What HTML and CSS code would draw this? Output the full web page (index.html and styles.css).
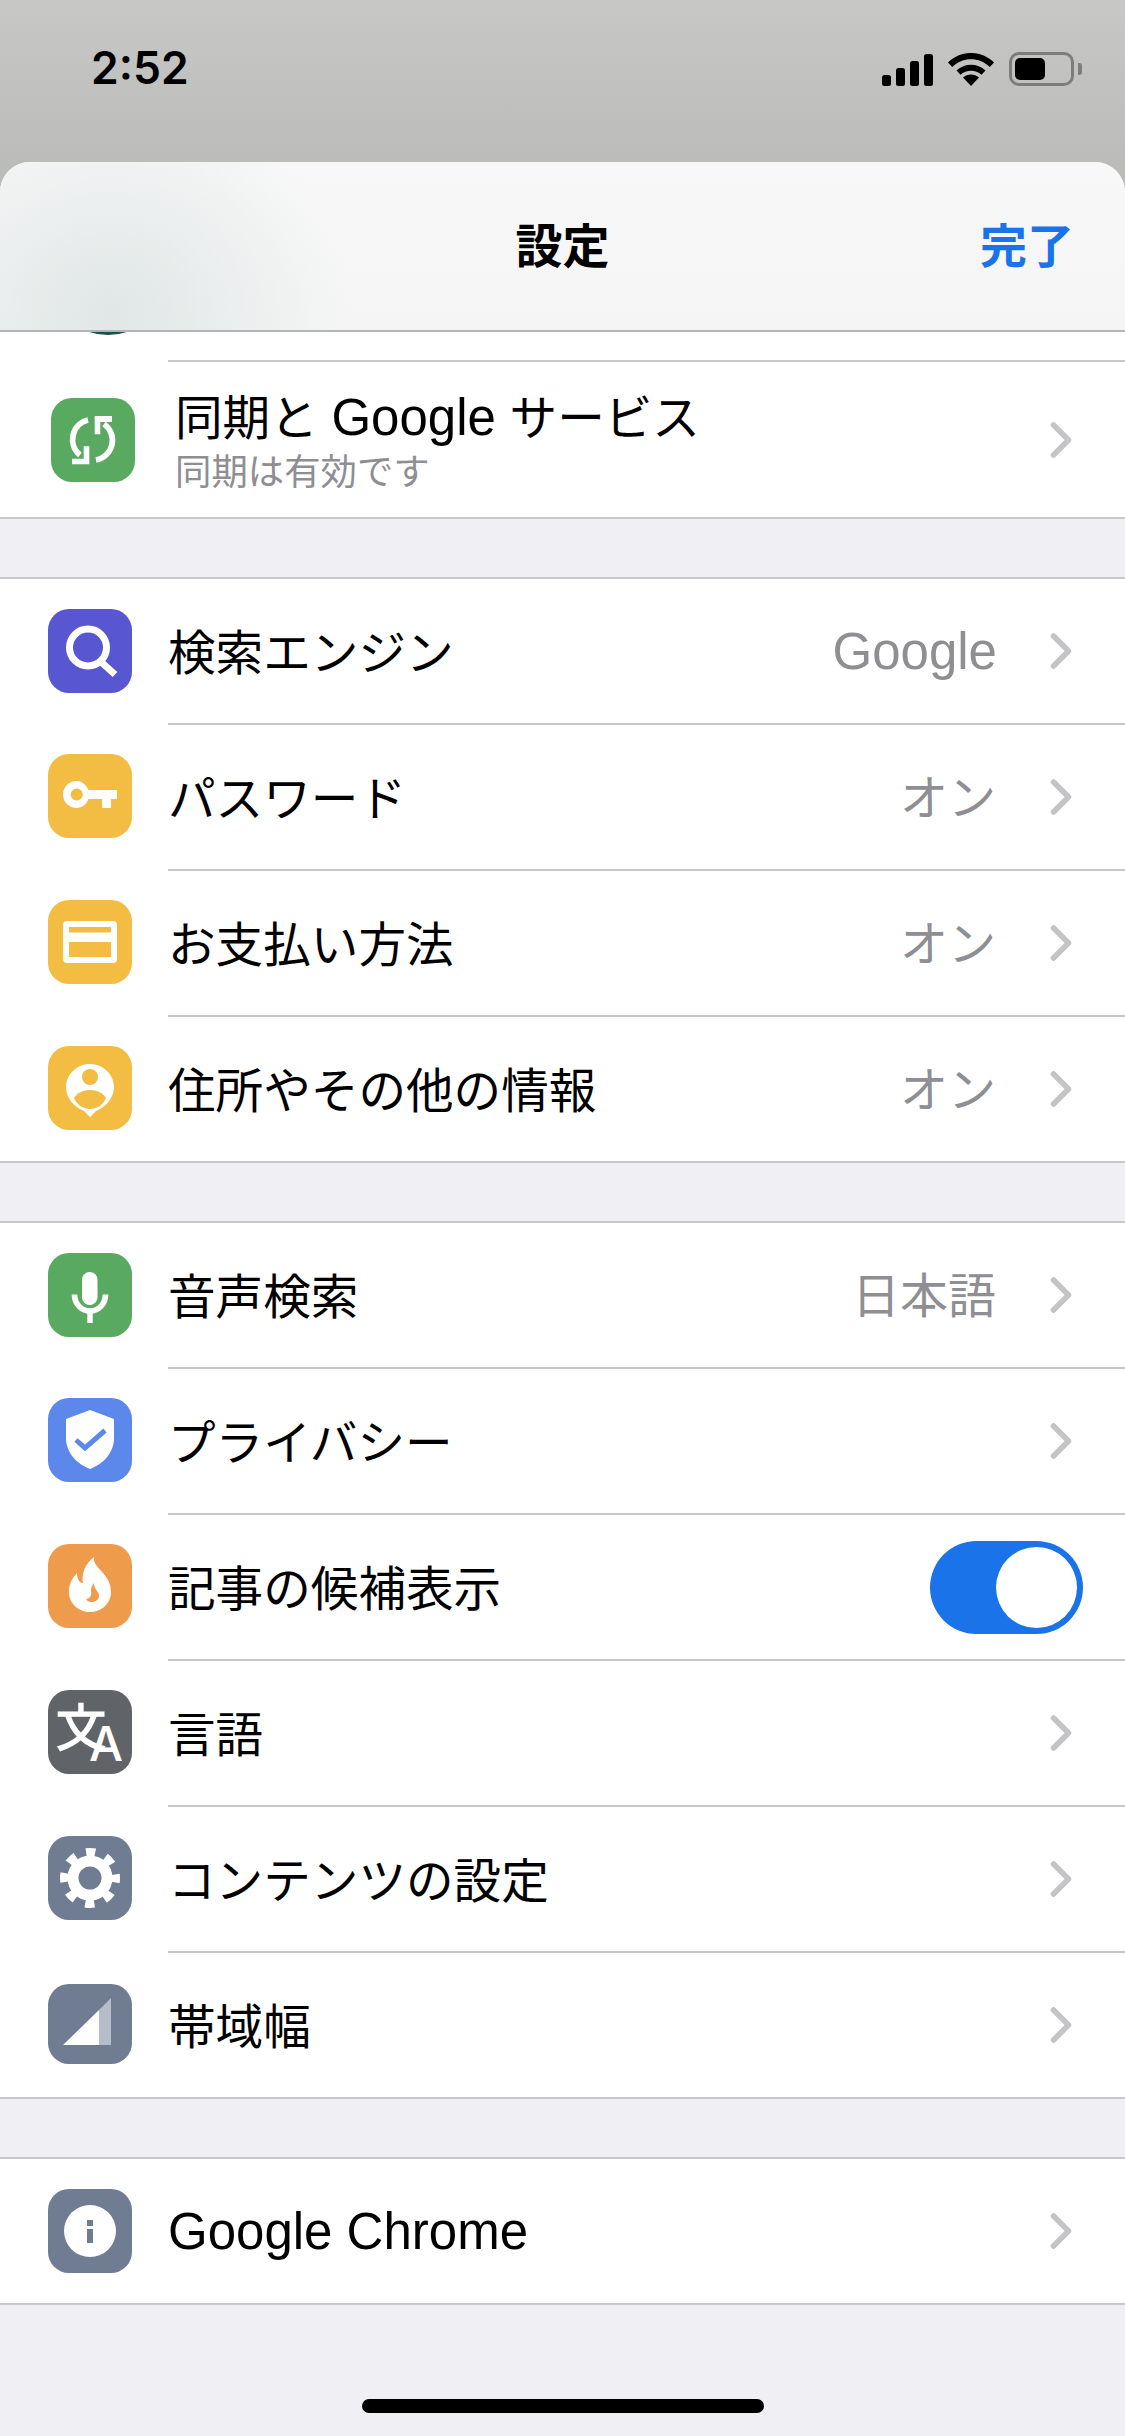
FILE: index.html
```html
<!DOCTYPE html>
<html lang="ja">
<head>
  <meta charset="UTF-8" />
  <meta name="viewport" content="width=device-width, initial-scale=1.0"/>
  <title>設定</title>
  <link rel="stylesheet" href="styles.css">
</head>
<body>

<div class="status-bar">
  <span class="clock">2:52</span>
  <div class="status-icons">
    <svg class="ic-signal" width="51" height="32" viewBox="0 0 51 32"><rect x="0" y="21" width="9" height="11" rx="2.5"/><rect x="14" y="14" width="9" height="18" rx="2.5"/><rect x="28" y="7" width="9" height="25" rx="2.5"/><rect x="42" y="0" width="9" height="32" rx="2.5"/></svg>
    <svg class="ic-wifi" width="46" height="33" viewBox="0 0 46 33"><path d="M23 33L15 24.500C19.500 20.500 26.500 20.500 31 24.500Z"/><path d="M8.500 17.500C16.500 9.800 29.500 9.800 37.500 17.500L33.500 21.800C27.700 16.300 18.300 16.300 12.500 21.800Z"/><path d="M0 9.500C13 -3.200 33 -3.200 46 9.500L41.800 14C31.500 3.500 14.500 3.500 4.200 14Z"/></svg>
    <div class="battery"><div class="battery-level"></div></div>
    <div class="battery-cap"></div>
  </div>
</div>

<div class="sheet">
  <header class="sheet-head">
    <h1>設定</h1>
    <a class="done">完了</a>
  </header>

  <div class="peek"><div class="peek-avatar"></div></div>

  <div class="group group-sync">
    <div class="row row-sync">
      <span class="icon green">
        <svg viewBox="0 0 84 84"><path class="line" d="M37 22A20 20 0 0 0 29 57"/><path class="line" d="M45 62A20 20 0 0 0 53 26"/><path class="fill" d="M21 60.700H32.700V48.300H38.300V66.300H21Z"/><path class="fill" d="M43.700 18H61V24H49.300V36.300H43.700Z"/></svg>
      </span>
      <div class="row-body">
        <div class="two-line">
          <div class="label">同期と <span class="latin">Google</span> サービス</div>
          <div class="sub">同期は有効です</div>
        </div>
        <svg class="chevron" viewBox="0 0 22 36"><path d="M3.500 3L18.500 18L3.500 33"/></svg>
      </div>
    </div>
  </div>

  <div class="group">
    <div class="row">
      <span class="icon indigo">
        <svg viewBox="0 0 84 84"><circle class="line line-7" cx="40" cy="38.500" r="18.500"/><path class="line line-7" d="M52 52L67 65.500"/></svg>
      </span>
      <div class="row-body">
        <div class="label">検索エンジン</div>
        <div class="value latin">Google</div>
        <svg class="chevron" viewBox="0 0 22 36"><path d="M3.500 3L18.500 18L3.500 33"/></svg>
      </div>
    </div>
    <div class="row">
      <span class="icon yellow">
        <svg viewBox="0 0 84 84"><path class="fill" fill-rule="evenodd" d="M28.700 27C34 27 38.500 31 40.500 36H69V45H63V54H54V45H40.500C38.500 50.500 34 54 28.700 54C21 54 15 48 15 40.500C15 33 21 27 28.700 27ZM28.700 34.500A6 6 0 1 0 28.700 46.500A6 6 0 1 0 28.700 34.500Z"/></svg>
      </span>
      <div class="row-body">
        <div class="label">パスワード</div>
        <div class="value">オン</div>
        <svg class="chevron" viewBox="0 0 22 36"><path d="M3.500 3L18.500 18L3.500 33"/></svg>
      </div>
    </div>
    <div class="row">
      <span class="icon yellow">
        <svg viewBox="0 0 84 84"><rect class="fill" x="15" y="21" width="54" height="42" rx="4"/><rect class="cut-yellow" x="21" y="27" width="42" height="5.500"/><rect class="cut-yellow" x="21" y="42" width="42" height="15"/></svg>
      </span>
      <div class="row-body">
        <div class="label">お支払い方法</div>
        <div class="value">オン</div>
        <svg class="chevron" viewBox="0 0 22 36"><path d="M3.500 3L18.500 18L3.500 33"/></svg>
      </div>
    </div>
    <div class="row">
      <span class="icon yellow">
        <svg viewBox="0 0 84 84"><path class="fill" d="M42 18C55.300 18 66 28.700 66 41C66 52 58 61 48 65L42 71L36 65C26 61 18 52 18 41C18 28.700 28.700 18 42 18Z"/><circle class="cut-yellow" cx="42" cy="31" r="8"/><path class="cut-yellow" d="M26 52C29 47 35 44 42 44C49 44 55 47 58 52C55 59 49 63 42 63C35 63 29 59 26 52Z"/></svg>
      </span>
      <div class="row-body">
        <div class="label">住所やその他の情報</div>
        <div class="value">オン</div>
        <svg class="chevron" viewBox="0 0 22 36"><path d="M3.500 3L18.500 18L3.500 33"/></svg>
      </div>
    </div>
  </div>

  <div class="group">
    <div class="row">
      <span class="icon green">
        <svg viewBox="0 0 84 84"><rect class="fill" x="34" y="19" width="15.500" height="33" rx="7.700"/><path class="line" d="M26.500 41.500C26.500 50.500 33 58 42 58C51 58 57.500 50.500 57.500 41.500"/><rect class="fill" x="39.300" y="57" width="5.400" height="13"/></svg>
      </span>
      <div class="row-body">
        <div class="label">音声検索</div>
        <div class="value">日本語</div>
        <svg class="chevron" viewBox="0 0 22 36"><path d="M3.500 3L18.500 18L3.500 33"/></svg>
      </div>
    </div>
    <div class="row">
      <span class="icon blue">
        <svg viewBox="0 0 84 84"><path class="fill" d="M42 12L66 21V40C66 55 55 66 42 71C29 66 18 55 18 40V21Z"/><path class="check" d="M28 42L37 50L57 32.500"/></svg>
      </span>
      <div class="row-body">
        <div class="label">プライバシー</div>
        <svg class="chevron" viewBox="0 0 22 36"><path d="M3.500 3L18.500 18L3.500 33"/></svg>
      </div>
    </div>
    <div class="row">
      <span class="icon orange">
        <svg viewBox="0 0 84 84"><path class="fill" d="M46 13C44 24 63 29 63 48C63 60 53 68 42 68C31 68 21 60 21 48C21 40 24 34 29 29C29 34 31 39 35 39C33 29 38 19 46 13Z"/><path class="cut-orange" d="M46 39C46 46 51 47 51 52C51 56 47 58 43 58C41 58 39 57 38 55C42 55 44 51 43 47C43 44 44 41 46 39Z"/></svg>
      </span>
      <div class="row-body">
        <div class="label">記事の候補表示</div>
        <div class="toggle"><div class="knob"></div></div>
      </div>
    </div>
    <div class="row">
      <span class="icon slate">
        <svg class="svg-open" viewBox="0 0 84 84"><text class="glyph" x="8" y="56"><tspan class="glyph-wen">文</tspan><tspan class="glyph-a" x="41" y="71">A</tspan></text></svg>
      </span>
      <div class="row-body">
        <div class="label">言語</div>
        <svg class="chevron" viewBox="0 0 22 36"><path d="M3.500 3L18.500 18L3.500 33"/></svg>
      </div>
    </div>
    <div class="row">
      <span class="icon steel">
        <svg viewBox="0 0 84 84"><circle class="line line-11" cx="42" cy="42" r="17"/><circle class="line line-teeth" cx="42" cy="42" r="26"/></svg>
      </span>
      <div class="row-body">
        <div class="label">コンテンツの設定</div>
        <svg class="chevron" viewBox="0 0 22 36"><path d="M3.500 3L18.500 18L3.500 33"/></svg>
      </div>
    </div>
    <div class="row">
      <span class="icon icon-short steel">
        <svg viewBox="0 2 84 80"><path class="dim" d="M51 28L63 16V63H51Z"/><path class="fill" d="M15 63L51 28V63Z"/></svg>
      </span>
      <div class="row-body">
        <div class="label">帯域幅</div>
        <svg class="chevron" viewBox="0 0 22 36"><path d="M3.500 3L18.500 18L3.500 33"/></svg>
      </div>
    </div>
  </div>

  <div class="group">
    <div class="row">
      <span class="icon steel">
        <svg viewBox="0 0 84 84"><circle class="fill" cx="42" cy="42" r="26"/><rect class="cut-steel" x="39" y="31" width="6" height="6"/><rect class="cut-steel" x="39" y="40" width="6" height="14"/></svg>
      </span>
      <div class="row-body">
        <div class="label latin">Google Chrome</div>
        <svg class="chevron" viewBox="0 0 22 36"><path d="M3.500 3L18.500 18L3.500 33"/></svg>
      </div>
    </div>
  </div>

  <div class="home-area"><div class="home-bar"></div></div>
</div>

</body>
</html>
```

FILE: styles.css
```css
* {
  box-sizing: border-box;
}
html, body {
  margin: 0;
  padding: 0;
}
body {
  width: 1125px;
  height: 2436px;
  overflow: hidden;
  background: linear-gradient(#c7c8c6, #bbbcb8 170px);
  font-family: "Noto Sans CJK JP", sans-serif;
  color: #000;
}

/* status bar */
.status-bar {
  height: 162px;
  display: flex;
  justify-content: space-between;
  align-items: flex-start;
  padding: 35px 43px 0 91px;
}
.clock {
  font-family: "Inter", sans-serif;
  font-size: 44.500px;
  line-height: 66px;
  font-weight: 600;
}
.status-icons {
  display: flex;
  align-items: center;
  padding-top: 17px;
}
.ic-signal {
  margin-top: 1px;
}
.ic-wifi {
  margin-left: 15px;
}
.battery {
  margin-left: 15px;
  width: 65px;
  height: 34px;
  border: 3px solid #7d7e7c;
  border-radius: 10px;
  padding: 3px;
}
.battery-level {
  width: 30px;
  height: 22px;
  background: #000;
  border-radius: 5px;
}
.battery-cap {
  margin-left: 4px;
  width: 4px;
  height: 12px;
  background: #7d7e7c;
  border-radius: 0 3px 3px 0;
}

/* sheet */
.sheet {
  height: 2274px;
  background: #efeff4;
  border-radius: 30px 30px 0 0;
  overflow: hidden;
}
.sheet-head {
  height: 170px;
  display: flex;
  justify-content: space-between;
  align-items: center;
  padding: 0 51px 8px 0;
  border-bottom: 2px solid #b4b4b4;
  background:
    radial-gradient(ellipse 240px 220px at 110px 150px, #e0e7e6 0%, rgba(224,231,230,0) 100%),
    linear-gradient(#f8f8f8, #f5f5f5);
  position: relative;
}
.sheet-head h1 {
  position: absolute;
  left: 0;
  right: 0;
  margin: 0;
  text-align: center;
  font-size: 47px;
  font-weight: 700;
}
.done {
  margin-left: auto;
  font-size: 47px;
  font-weight: 700;
  color: #1a73e8;
}

.peek {
  height: 28px;
  background: #fff;
  overflow: hidden;
}
.peek-avatar {
  width: 120px;
  height: 120px;
  margin: -117px 0 0 48px;
  border-radius: 50%;
  background: #14524a;
}

/* groups and rows */
.group {
  margin-top: 58px;
  background: #fff;
  border-top: 2px solid #c8c8cc;
  border-bottom: 2px solid #c8c8cc;
}
.group-sync {
  margin-top: 0;
  border-top: 0;
}
.row {
  height: 146px;
  display: flex;
  align-items: center;
  padding-left: 48px;
}
.row:first-child {
  height: 144px;
}
.row + .row .row-body {
  border-top: 2px solid #c8c8cc;
}
.row-body {
  flex: 1;
  align-self: stretch;
  display: flex;
  align-items: center;
  margin-left: 36px;
  padding-right: 53px;
  min-width: 0;
}
.label {
  flex: 1;
  font-size: 47.600px;
  line-height: 60px;
  padding-bottom: 3px;
  white-space: nowrap;
  word-spacing: 3px;
}
.value {
  font-size: 48px;
  color: #8e8e93;
  margin-right: 54px;
  padding-bottom: 6px;
}
.latin {
  font-family: "Liberation Sans", sans-serif;
  font-size: 51px;
}
.label.latin {
  padding-bottom: 0;
  padding-top: 1px;
  word-spacing: 0;
}
.value.latin {
  margin-right: 53px;
  padding-bottom: 0;
}
.chevron {
  width: 22px;
  height: 36px;
  flex: none;
}
.chevron path {
  fill: none;
  stroke: #c4c4c7;
  stroke-width: 5.500;
  stroke-linecap: round;
  stroke-linejoin: round;
}

.row.row-sync {
  height: 157px;
  padding-left: 51px;
}
.row-sync .row-body {
  margin-left: 33px;
  padding-left: 7px;
  border-top: 2px solid #c8c8cc;
}
.row-sync .icon {
  margin-top: 3px;
}
.two-line {
  flex: 1;
  padding-bottom: 3px;
}
.two-line .label {
  line-height: 58px;
  padding-bottom: 0;
}
.sub {
  font-size: 36.400px;
  line-height: 44px;
  color: #8e8e93;
}

/* icon tiles */
.icon {
  width: 84px;
  height: 84px;
  flex: none;
  border-radius: 21px;
  display: block;
}
.icon svg {
  display: block;
  width: 84px;
  height: 84px;
}
.icon-short {
  height: 80px;
}
.icon-short svg {
  height: 80px;
}
.svg-open {
  overflow: visible;
}
.green { background: #5aa961; }
.indigo { background: #5856d0; }
.yellow { background: #f2bd42; }
.blue { background: #5b88ea; }
.orange { background: #ee9c4c; }
.slate { background: #606367; }
.steel { background: #6f7c91; }

.fill { fill: #fff; }
.dim { fill: #b6bdc8; }
.line {
  fill: none;
  stroke: #fff;
  stroke-width: 5.700;
}
.line-7 {
  stroke-width: 7;
}
.line-11 {
  stroke-width: 11;
}
.line-teeth {
  stroke-width: 8;
  stroke-dasharray: 9.400 11;
  stroke-dashoffset: 4.700;
}
.check {
  fill: none;
  stroke: #5b88ea;
  stroke-width: 5;
}
.cut-yellow { fill: #f2bd42; }
.cut-orange { fill: #ee9c4c; }
.cut-steel { fill: #6f7c91; }
.glyph {
  fill: #fff;
}
.glyph-wen {
  font-family: "Noto Sans CJK JP", sans-serif;
  font-size: 50px;
  stroke: #fff;
  stroke-width: 1.500;
}
.glyph-a {
  font-family: "Inter", sans-serif;
  font-size: 48px;
  font-weight: 500;
}

/* toggle */
.toggle {
  width: 153px;
  height: 93px;
  margin: 0 0 0 auto;
  position: relative;
  left: 11px;
  padding: 6px;
  border-radius: 47px;
  background: #1a73e8;
  display: flex;
  justify-content: flex-end;
}
.knob {
  width: 81px;
  height: 81px;
  border-radius: 50%;
  background: #fff;
}

.home-area {
  display: flex;
  justify-content: center;
  padding-top: 94px;
}
.home-bar {
  width: 402px;
  height: 14px;
  border-radius: 7px;
  background: #000;
}
```
